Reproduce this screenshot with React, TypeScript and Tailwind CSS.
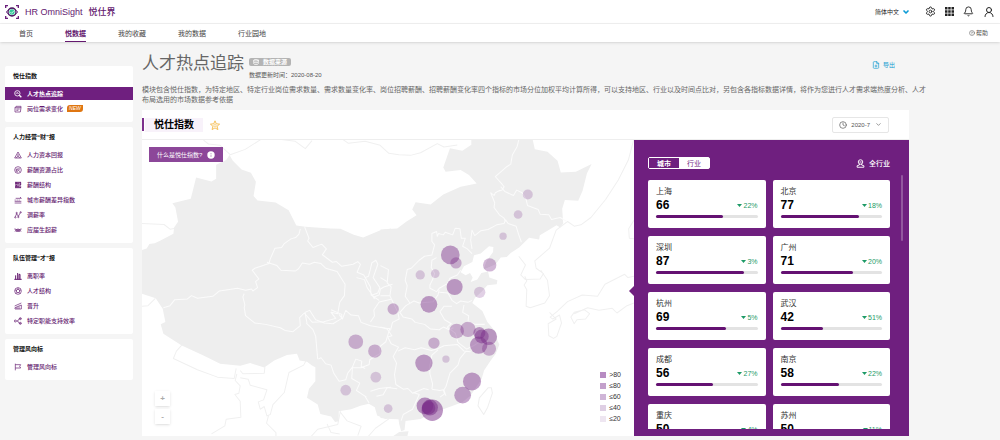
import {
  Bell,
  ChevronDown,
  CircleQuestionMark,
  Clock,
  Database,
  FilePlus,
  Settings,
  UserRound,
} from 'lucide-react'
import { ComponentType, ReactNode, useState } from 'react'

type IconType = ComponentType<{ className?: string }>

interface MenuItem {
  label: string
  icon: IconType
  active?: boolean
  isNew?: boolean
}

interface MenuGroup {
  title: string
  items: MenuItem[]
}

interface City {
  name: string
  score: number
  drop: string
}

function lineIcon(content: ReactNode): IconType {
  return ({ className }) => (
    <svg viewBox="0 0 24 24" className={className} fill="none" stroke="currentColor" strokeWidth="2">
      {content}
    </svg>
  )
}

const IconSearch = lineIcon(
  <>
    <circle cx="10" cy="10" r="8" strokeWidth="2.5" />
    <path d="M16 16l6 6" strokeWidth="4" />
    <path d="M5 10h3l2-3 2 5 2-2" />
  </>
)

const IconFolder = lineIcon(<path d="M3 8v13h16l2-13zM3 8l3-4h15v4M7 12h10M7 16h6" />)

const IconTriangle = lineIcon(<path d="M12 3 2 21h20zM12 9v5M7 21l5-7 5 7" />)

const IconPie = lineIcon(
  <>
    <circle cx="12" cy="12" r="10" />
    <path d="M12 6v6l6 5M7 8v8l5 2M12 12H7M16 7v4" />
  </>
)

const IconLayers = lineIcon(<path d="M3 4h18M3 8h14M3 12h18M3 16h14M3 20h18M7 4v4M20 4v8M7 12v4M20 16v4" strokeWidth="3" />)

const IconExchange = lineIcon(<path d="M5 7h17l-4-4M2 12h3M8 12h3M14 12h3M2 16h20M2 21h20" />)

const IconNodes = lineIcon(
  <>
    <path d="M4 17 8 8l5 8 6-11" />
    <circle cx="4" cy="19" r="2" />
    <circle cx="13" cy="18" r="2" />
    <circle cx="20" cy="4" r="2" />
    <circle cx="8" cy="6" r="2" />
  </>
)

const IconWave = lineIcon(<path d="M1 9h4l3 8 4-9 4 9 3-8h4M3 17l5-8 4 9 4-9 5 8" />)

const IconBars = lineIcon(<path d="M1 22h22M5 22V10M11 22V3M15 22V7h3v15" strokeWidth="3" />)

const IconRing = lineIcon(
  <>
    <circle cx="12" cy="12" r="10" />
    <circle cx="12" cy="12" r="5" />
    <path d="M12 2v5M21 9l-5 1M18 20l-3-4M6 20l3-4M3 9l5 1" />
  </>
)

const IconSlope = lineIcon(<path d="M2 12 22 3M3 21v-4l19-8v12zM9 21v-6M15 21v-8" />)

const IconBranch = lineIcon(
  <>
    <circle cx="4" cy="12" r="3" />
    <path d="M7 12h5M22 5h-6l-5 7 5 7h6" />
    <circle cx="19" cy="5" r="3" />
    <circle cx="19" cy="19" r="3" />
  </>
)

const IconFlag = lineIcon(<path d="M4 2v20M4 5h16l-3 5 3 5H9M4 15h5" />)

const groups: MenuGroup[] = [
  {
    title: '悦仕指数',
    items: [
      { label: '人才热点追踪', icon: IconSearch, active: true },
      { label: '岗位需求变化', icon: IconFolder, isNew: true },
    ],
  },
  {
    title: '人力经营“财”报',
    items: [
      { label: '人力资本回报', icon: IconTriangle },
      { label: '薪酬资源占比', icon: IconPie },
      { label: '薪酬结构', icon: IconLayers },
      { label: '城市薪酬差异指数', icon: IconExchange },
      { label: '调薪率', icon: IconNodes },
      { label: '应届生起薪', icon: IconWave },
    ],
  },
  {
    title: '队伍管理“才”报',
    items: [
      { label: '离职率', icon: IconBars },
      { label: '人才结构', icon: IconRing },
      { label: '晋升', icon: IconSlope },
      { label: '特定职能支持效率', icon: IconBranch },
    ],
  },
  {
    title: '管理风向标',
    items: [{ label: '管理风向标', icon: IconFlag }],
  },
]

const navItems = ['首页', '悦数据', '我的收藏', '我的数据', '行业园地']

const cities: City[] = [
  { name: '上海', score: 66, drop: '22%' },
  { name: '北京', score: 77, drop: '18%' },
  { name: '深圳', score: 87, drop: '3%' },
  { name: '广州', score: 71, drop: '20%' },
  { name: '杭州', score: 69, drop: '5%' },
  { name: '武汉', score: 42, drop: '51%' },
  { name: '成都', score: 56, drop: '27%' },
  { name: '南京', score: 58, drop: '22%' },
  { name: '重庆', score: 50, drop: '4%' },
  { name: '苏州', score: 50, drop: '11%' },
]

const legend = [
  { label: '>80', color: 'bg-[#b78bc2]' },
  { label: '≤80', color: 'bg-[#c3a0cb]' },
  { label: '≤60', color: 'bg-[#cfb5d7]' },
  { label: '≤40', color: 'bg-[#dfcfe4]' },
  { label: '≤20', color: 'bg-[#eee6f1]' },
]

// x, y, radius, opacity
const bubbles = [
  [646, 604, 22, 0.34],
  [703, 632, 20, 0.34],
  [706, 710, 16, 0.22],
  [616, 749, 16, 0.22],
  [743, 804, 13, 0.22],
  [758, 506, 17, 0.34],
  [1161, 163, 15, 0.22],
  [1132, 223, 13, 0.22],
  [1087, 288, 11, 0.22],
  [929, 344, 28, 0.45],
  [946, 368, 17, 0.34],
  [839, 404, 14, 0.22],
  [884, 400, 13, 0.22],
  [1047, 374, 20, 0.34],
  [942, 440, 24, 0.45],
  [1017, 456, 17, 0.22],
  [865, 492, 25, 0.45],
  [948, 572, 22, 0.34],
  [982, 567, 23, 0.34],
  [1016, 578, 18, 0.45],
  [1023, 588, 21, 0.45],
  [1044, 589, 25, 0.45],
  [1014, 614, 26, 0.45],
  [1045, 625, 21, 0.34],
  [880, 608, 17, 0.34],
  [916, 656, 11, 0.22],
  [850, 668, 26, 0.45],
  [994, 723, 27, 0.45],
  [966, 764, 25, 0.42],
  [853, 796, 25, 0.5],
  [868, 801, 24, 0.5],
  [875, 809, 32, 0.5],
  [864, 802, 20, 0.5],
]

function Logo() {
  return (
    <svg viewBox="0 0 42 42" className="size-3.5" fill="none">
      <path d="M2 9V2h7M33 2h7v7M40 33v7h-7M9 40H2v-7" stroke="#6b1f7c" strokeWidth="4" />
      <path d="M3 21Q21-1 39 21Q21 43 3 21z" stroke="#6b1f7c" strokeWidth="2" />
      <circle cx="21" cy="21" r="12" stroke="#4b1560" strokeWidth="4" />
      <circle cx="21" cy="21" r="8" fill="#35c99a" />
      <path d="M16 21l4 4 7-8" stroke="#fff" strokeWidth="2" />
    </svg>
  )
}

function TopBar() {
  return (
    <header className="bg-white">
      <div className="flex h-6 items-center justify-between border-b border-[#f1f1f1] pr-[5px] pl-[5px]">
        <div className="flex items-center gap-[6px] text-[#64196f]">
          <Logo />
          <div className="flex items-baseline gap-[6px] text-[9px] leading-3 font-medium">
            <span>HR OmniSight</span>
            <span>悦仕界</span>
          </div>
        </div>
        <div className="flex items-center gap-[9px] text-[#222]">
          <button className="mr-[6px] flex items-center gap-[3px] text-[6px] leading-none">
            简体中文
            <ChevronDown className="size-2 text-[#0c9bd6]" strokeWidth={5} />
          </button>
          <button aria-label="设置">
            <Settings className="size-[11px]" strokeWidth={2} />
          </button>
          <button aria-label="应用">
            <svg viewBox="0 0 9 9" className="size-[9px]" fill="currentColor">
              <path d="M0 0h2.5v2.5H0zM3.2 0h2.5v2.5H3.2zM6.5 0H9v2.5H6.5zM0 3.2h2.5v2.5H0zM3.2 3.2h2.5v2.5H3.2zM6.5 3.2H9v2.5H6.5zM0 6.5h2.5V9H0zM3.2 6.5h2.5V9H3.2zM6.5 6.5H9V9H6.5z" />
            </svg>
          </button>
          <button aria-label="通知">
            <Bell className="size-[11px]" strokeWidth={2} />
          </button>
          <button aria-label="用户">
            <UserRound className="size-3" strokeWidth={2} />
          </button>
        </div>
      </div>
      <nav className="flex h-[18px] items-stretch justify-between pr-3 pl-[19px] shadow-sm">
        <div className="flex gap-8">
          {navItems.map((item) => (
            <a
              key={item}
              href="#"
              className={
                item === '悦数据'
                  ? 'flex items-center border-b border-[#64196f] pt-px text-[7px] leading-none font-bold text-[#64196f]'
                  : 'flex items-center text-[7px] leading-none text-[#444]'
              }
            >
              {item}
            </a>
          ))}
        </div>
        <a href="#" className="flex items-center gap-px text-[6px] leading-none text-[#555]">
          <CircleQuestionMark className="size-[6px]" />
          帮助
        </a>
      </nav>
    </header>
  )
}

function Sidebar() {
  return (
    <aside className="flex w-32 shrink-0 flex-col gap-[5px] pt-6">
      {groups.map((group) => (
        <section key={group.title} className="rounded-xs bg-white pb-[6px]">
          <h2 className="flex h-5 items-center pl-2 text-[6px] leading-none font-bold text-[#111]">
            {group.title}
          </h2>
          <ul>
            {group.items.map(({ label, icon: Icon, active, isNew }) => (
              <li key={label} className="py-px">
                <a
                  href="#"
                  className={
                    active
                      ? 'flex h-[13px] items-center bg-[#6f1f7f] pl-[9px] text-[6px] leading-none font-bold text-white'
                      : 'flex h-[13px] items-center pl-[9px] text-[6px] leading-none font-medium text-[#64196f]'
                  }
                >
                  <Icon className="mr-[5px] size-2" />
                  {label}
                  {isNew && (
                    <span className="ml-1 rounded-tl-[3px] rounded-br-[3px] bg-[#df7611] px-[2px] py-px text-[5px] leading-none font-normal text-white italic">
                      NEW
                    </span>
                  )}
                </a>
              </li>
            ))}
          </ul>
        </section>
      ))}
    </aside>
  )
}

function ChinaMap() {
  return (
    <svg
      viewBox="6 0 1473 888"
      preserveAspectRatio="xMinYMin slice"
      className="absolute inset-0 h-full w-full"
      fill="none"
      strokeLinejoin="round"
    >
      {/* neighbouring borders */}
      <g stroke="#f0f0f0" strokeWidth="3">
        <path d="M190 0l15 12 35 4 30 28 45-16 60-38M405-4l60 8 30 22 20-24M604-4l20 14 50-6 45 12 26 24 30 4 35 2 30-8 50-27 20 10 40-6" />
        <path d="M6 250l66 3 18 14 12-2M6 498l18-2 22-22M125 614l-16 18-9 22 72 34 60 22 50 4 6-30M300 690l8 10 64-2 2-18M290 700l-5 20 15 16-4 22-12 4 16 20 2 48-44 6-4 20-40 24M300 712l24 4 6 18 50 14-10 30-16 6 6 22 12-8 8 28 10-4 8-30 34-36 14-60 44-22 16-30M385 824l-6 24 28 28v20M512 888l20-22 60-14 8-40M600 815l20 26 42 16-10 28M560 850l12 26 26 4M745 835l-40 28-22 25" />
        <path d="M1478 0l-16 60-30 60-38 58-44 54-30 22-20 4-20-14-34 26-20 54-44 38 4 22 22 16-10 16-44 2-14-14 14-30-20-26M1200 390l20 30 6 46-14 22-44 14-12-4 2-50-8-14 8-12-6-14M1479 240l-16 26 2 28 14 2M1479 408l-18 4-10-10-59 30-22 36-46-4-44 20-30 28-22 18 8 6 20-12 6 24-14 40-10 6-14-8-2-36 24-14-20-20M1300 520l40-18 34 8 40-6 14 14 30-22 21-8M1290 530l10-14 30-8 16 12-12 16-26 2-8 12z" />
      </g>
      {/* mainland, drawn as a western and an eastern half */}
      <g fill="#eeeeee">
        <path d="M4 330L20 325 28 311 44 309 60 302 100 281 102 262 114 245 106 202 97 189 152 176 168 112 214 124 228 116V74L258 60 268 45 278 62 304 88 332 98 347 125 340 168 352 181 406 187 445 210 468 256 495 260 570 265 600 266 640 284 668 292 720 270 752 265V832L735 835 710 825 703 800 685 790 660 796 632 806 595 812V842L584 844 572 828 540 820 532 792 500 772 506 745 525 722V680L515 675 500 664 478 660 470 640 440 644 402 660 372 681 330 668 300 676 240 670 190 645 125 615 70 580 62 552 76 545 68 505 47 474 4 460z" />
        <path
          transform="translate(720)"
          d="M0 268L50 265 78 244 108 225 95 208 105 186 150 193 188 163 240 140 288 130 265 105 240 90 195 95 188 82 208 25 245 32 272 14V-4H455L462 28 500 35 530 62 540 97 585 95 632 72 618 100 605 152 592 182 552 180 544 206 547 250 538 262 527 255 500 272 477 285 475 298 445 293 415 322 390 338 378 350 360 352 345 372 308 388 318 362 337 335 338 320 325 318 300 340 280 345 275 365 250 378 240 396 255 405 268 398 276 412 270 425 290 418 302 398 322 394 326 412 350 420 348 432 320 435 302 455 283 472 275 488 290 500 305 512 320 545 345 575 350 600 356 612 345 640 330 660 310 690 303 715 270 765 245 785 190 805 150 820 120 835 75 841 72 868 62 872 56 850 54 836 30 835 0 832z"
        />
        <path d="M756 888l20-14 28-2-4 16z" />
      </g>
      <path d="M1052 742l3 16-14 42-12 22-17-26 4-24 26-30z" fill="#fff" stroke="#efefef" strokeWidth="3" />
      {/* province borders */}
      <g stroke="#fbfbfb" strokeWidth="3">
        <path d="M70 502l20-6 14-18 38-2 12-10 18 8 46-6 20-16 54-8 24 6 18-4 4 6 14-10-6-18 10-8-20-26 8-6 42-14 4-14 14-32 20-2 8-12 20-14 14-4 10-10 4-16M380 366l30 10 12 14 44 2 8-6 12-18 22 4 14-6 20 4 14 14 34 10 24 38-2 34-14 20-6 34-20-4 14 18-36 10-34 2-24-28-14 14 2 24-22 18-24-4-14-8-44-10-32-4-28-22-4-24 2-8-6-24 4-10" />
        <path d="M492 258l14 36-4 8 16 20 20-8 6-2 14 14-12 18 6 4 24 18 12-2 16 14 34-6 14-8 8 8-10 24 20 8 20 36 2 24 24 16M674 412l10-4 6-22 4-18 12-8 6 12-14 40 20 30-6 16-16 6 6 12M648 412l24 6 8 24 20 28 16-6 4-18 10-6 26-8" />
        <path d="M498 548l20 20 8 20 6 68M534 656l8-4 14 18 16 4 8 24 16 24 20-4 6-20 14-18 10-24 18 6-2 16 12 6M596 522l10 14 10-26 16 14 22 2 8 20 28 10 50 8 8 0-12 40-20 16 4 18-32 20-2 14-24 10-26 0-2 32 24 14-10 22 30 20M500 548l-6-32 14-6 18 28 26 10 26 2 26-16 0-12-32-14M690 545l12-18-2-18 16-24 36-8M672 765l14 22M690 752l26-8 36-4" />
        <path transform="translate(720)" d="M415-4l-6 24-14 24-5 28-12 8-34 30 18 20 8 10-6 10-14 4M358 150l-14 8-4 8-10-8 12 30-2 14 16 22 14 10 4 10M360 140l12 14 26 12 10-16 16 8 12 20 4 18 32 12 6 14 26 2 8 14 26-6 20 12" />
        <path transform="translate(720)" d="M374 238l8 12 24 8 8 26 8 22M374 240l-4 10-22 4-26 14-22 4-18 14-8-16-4 30 4 26M274 340l-14-14-14-8 8-24-12 0-4-28-14-2-8 20-22-8-6 8-14-4-4 8-2-14-14 6 0 24 8 10-8 30-22 4-16 12-24 24-12 4-6 32 6 16-6 32 14 20" />
        <path transform="translate(720)" d="M168 352l-14 8-2 22 10 18-6 18-8 16 0 10 20 10 8-10 24-14 8-16 22-10 10-14M176 448l-4 16-14 20-42 4-16-6-24 14-18 20 10 14 26 6 10 10 28 6 18 14 26 2 12-8 18 8 12-6M176 456l26 2 12 22 14 10 12-8 22 4 12-6M214 498l-24 0-12 16 14 24 20 12-12 10 24 18 8 28 26 20 20-10 24-14M250 494l-4 22 18 10-2 18 22 8 28 0" />
        <path transform="translate(720)" d="M0 560l20 6 14 20-12 4 10 20 22 10-8 14-8 14 10 20-6 34 4 30 22 14 14-2 14 14 34-14 14 4M52 632l22-10 28 6 20-6 30 8 22-6 16-8 40-4 20 20 20 2M172 628l-18 16-6 30 0 26 8 30-2 16M256 632l-18 22-6 20-24 24-12 40-6 10 6 18M154 746l24 4 10-2 4 12-14 10M50 745l-30-4-12 22-20 4M98 756l18 6-20 44-28 16-6 18M0 376l24 12-4 40 12 12-4 28M0 412l20 12M0 466l28 0 24 50 4 20-20 10-6 24" />
      </g>
      <g fill="#782a88">
        {bubbles.map(([x, y, r, opacity], i) => (
          <circle key={i} cx={x} cy={y} r={r} opacity={opacity} />
        ))}
      </g>
    </svg>
  )
}

function MapPane() {
  return (
    <div className="relative flex-1 overflow-hidden">
      <ChinaMap />
      <button className="absolute top-[7px] left-[7px] flex h-[15px] items-center gap-[5px] bg-[#8c4799] px-2 text-[6px] leading-none text-white">
        什么是悦仕指数?
        <svg viewBox="0 0 8 8" className="size-2">
          <circle cx="4" cy="4" r="3.7" fill="#fff" />
          <path d="M4 2v1M4 3.6V6" stroke="#b890c0" strokeWidth="0.8" />
        </svg>
      </button>
      <div className="absolute bottom-3 left-[13px] flex flex-col gap-[3px]">
        <button className="size-[15px] bg-white text-[8px] leading-none font-bold text-[#aaa] shadow-sm">+</button>
        <button className="size-[15px] bg-white text-[8px] leading-none font-bold text-[#aaa] shadow-sm">-</button>
      </div>
      <ul className="absolute right-[13px] bottom-[14px] flex flex-col gap-1">
        {legend.map((entry) => (
          <li key={entry.label} className="flex items-center gap-[3px] text-[7px] leading-[7px] text-[#333]">
            <span className={`size-[6px] ${entry.color}`} />
            {entry.label}
          </li>
        ))}
      </ul>
      <svg viewBox="0 0 5 10" className="absolute top-[146px] right-0 h-[10px] w-[5px]">
        <path d="M5 0v10L0 5z" fill="#6f1f7f" />
      </svg>
    </div>
  )
}

function CityCard({ city }: { city: City }) {
  return (
    <li className="h-12 rounded-xs bg-white px-2 pt-[7px]">
      <p className="text-[8px] leading-[9px] text-[#333]">{city.name}</p>
      <div className="mt-[3px] flex items-center justify-between">
        <span className="text-[12px] leading-3 font-bold text-black">{city.score}</span>
        <span className="flex items-center gap-px text-[7px] leading-none text-[#1d9a66]">
          <svg viewBox="0 0 5 3" className="h-[3px] w-[5px]" fill="currentColor">
            <path d="M0 0h5L2.5 3z" />
          </svg>
          {city.drop}
        </span>
      </div>
      <div className="mt-1 h-[3px] rounded-full bg-[#e3e3e3]">
        <div className="h-full rounded-full bg-[#641172]" style={{ width: `${city.score}%` }} />
      </div>
    </li>
  )
}

function CityPanel() {
  const [tab, setTab] = useState('城市')

  return (
    <div className="flex w-[275px] shrink-0 flex-col bg-[#6f1f7f] pt-[17px] pr-[6px] pb-[7px] pl-[14px]">
      <div className="flex items-center justify-between pr-[13px]">
        <div className="flex rounded-xs border border-white bg-white">
          {['城市', '行业'].map((name) => (
            <button
              key={name}
              onClick={() => setTab(name)}
              className={
                tab === name
                  ? 'h-[10px] w-[30px] bg-[#6f1f7f] text-[7px] leading-none font-bold text-white'
                  : 'h-[10px] w-[30px] text-[7px] leading-none text-[#6f1f7f]'
              }
            >
              {name}
            </button>
          ))}
        </div>
        <button className="flex items-center gap-1 text-[7px] leading-none font-medium text-white">
          <svg viewBox="0 0 24 24" className="size-[9px]" fill="none" stroke="currentColor" strokeWidth="2.5">
            <circle cx="12" cy="8" r="6" />
            <path d="M9 13v3l-6 2v4h18v-4l-6-2v-3M9 8h6" />
          </svg>
          全行业
        </button>
      </div>
      <div className="mt-[6px] flex justify-between">
        <ul className="mt-[5px] mr-[11px] grid h-[249px] flex-1 auto-rows-max grid-cols-2 gap-x-[7px] gap-y-2 overflow-hidden">
          {cities.map((city) => (
            <CityCard key={city.name} city={city} />
          ))}
        </ul>
        <div className="h-[66px] w-[2px] rounded-full bg-white/25" />
      </div>
    </div>
  )
}

export default function App() {
  return (
    <div className="min-h-screen bg-[#f5f5f5] font-['Liberation_Sans','Noto_Sans_CJK_SC',sans-serif]">
      <TopBar />
      <div className="flex gap-[9px] pr-[91px] pl-[5px]">
        <Sidebar />
        <main className="min-w-0 flex-1 pt-3">
          <div className="flex items-start justify-between pr-3.5">
            <div className="flex gap-[5px]">
              <h1 className="text-[17px] leading-5 text-[#666]">人才热点追踪</h1>
              <div className="flex flex-col items-start gap-[6px] pt-1">
                <button className="flex h-2 items-center gap-1 rounded-xs bg-[#b4b4b4] px-1 text-[6px] leading-none font-bold text-white">
                  <Database className="size-[6px]" strokeWidth={3} />
                  数据来源
                </button>
                <p className="text-[6px] leading-[7px] text-[#555]">数据更新时间：2020-08-20</p>
              </div>
            </div>
            <button className="flex items-center gap-[3px] pt-[7px] text-[6px] leading-none text-[#149bd0]">
              <FilePlus className="size-2" />
              导出
            </button>
          </div>
          <p className="mt-[6px] -mr-5 text-[7px] leading-[10px] text-[#666]">
            模块包含悦仕指数，为特定地区、特定行业岗位需求数量、需求数量变化率、岗位招聘薪酬、招聘薪酬变化率四个指标的市场分位加权平均计算所得，可以支持地区、行业以及时间点比对，另包含各指标数据详情，将作为您进行人才需求端热度分析、人才布局选用的市场数据参考依据
          </p>

          <section className="mt-[5px] bg-white">
            <div className="flex h-[30px] items-center justify-between border-b border-[#eee] pr-5">
              <div className="flex items-center gap-[7px]">
                <h2 className="flex h-[13px] items-center border-l-2 border-[#7d2f8d] text-[10px] leading-none font-bold text-black">
                  <span className="ml-px bg-[#f8f2fa] py-[2px] pr-[9px] pl-[9px]">悦仕指数</span>
                </h2>
                <button aria-label="收藏">
                  <svg
                    viewBox="0 0 24 24"
                    className="size-[10px]"
                    fill="none"
                    stroke="#f4b63f"
                    strokeWidth="2"
                    strokeLinejoin="round"
                  >
                    <path d="M12 2l3 7 8 1-6 5 2 8-7-4-7 4 2-8-6-5 8-1z" />
                    <path d="M12 9l1 3h3l-2 2 1 3-3-2-3 2 1-3-2-2h3z" strokeWidth="1" />
                  </svg>
                </button>
              </div>
              <button className="flex h-4 items-center gap-1 rounded-xs border border-[#e6e6e6] px-[6px] text-[6px] leading-none text-[#555]">
                <Clock className="size-2" strokeWidth={2} />
                2020-7
                <ChevronDown className="ml-px size-[7px]" />
              </button>
            </div>
            <div className="flex">
              <MapPane />
              <CityPanel />
            </div>
          </section>
        </main>
      </div>
    </div>
  )
}
